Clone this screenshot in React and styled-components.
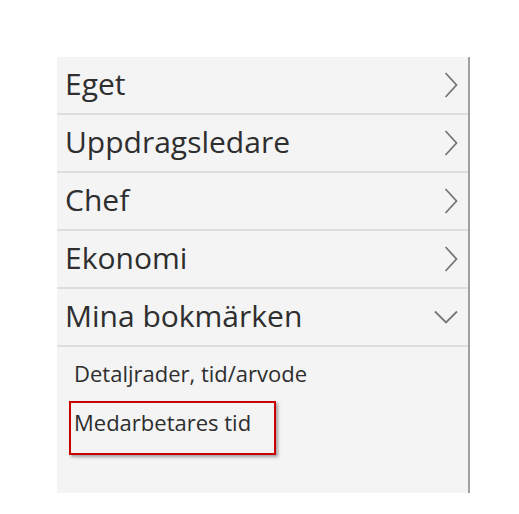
import styled, { createGlobalStyle } from "styled-components"

var Global = createGlobalStyle`
body {
margin: 0;
background: #fff;
font-family: "Open Sans", "Noto Sans", sans-serif;
}
`

var ChevronRight = () => (
  <svg width="14" height="26" viewBox="0 0 14 26" fill="none" stroke="#767676" strokeWidth="1.8">
    <path d="M1.5 1 L12.5 13 L1.5 25" />
  </svg>
)

var ChevronDown = () => (
  <svg width="24" height="14" viewBox="0 0 24 14" fill="none" stroke="#767676" strokeWidth="1.8">
    <path d="M1 1.5 L12 12.5 L23 1.5" />
  </svg>
)

var menu = ["Eget", "Uppdragsledare", "Chef", "Ekonomi"]

var App = () => (
  <>
    <Global />
    <Panel>
      {menu.map((label) => (
        <Row key={label}>
          <Label>{label}</Label>
          <ChevronRight />
        </Row>
      ))}
      <Row>
        <Label>Mina bokmärken</Label>
        <ChevronDown />
      </Row>
      <Sub>
        <SubItem>Detaljrader, tid/arvode</SubItem>
        <SubItem marked>Medarbetares tid</SubItem>
      </Sub>
    </Panel>
  </>
)

var Panel = styled.div`
margin: 57px 0 0 57px;
width: 411px;
height: 436px;
background: #f4f4f4;
border-right: 2px solid #a0a0a0;
display: flex;
flex-direction: column;
`

var Row = styled.div`
height: 56px;
border-bottom: 2px solid #dedede;
display: flex;
align-items: center;
justify-content: space-between;
padding: 0 8px 0 8px;
font-size: 30px;
color: #2e2e2e;
svg:first-of-type { margin-right: 2px; }
`

var Label = styled.span`
margin-bottom: 3px;
`

var Sub = styled.div`
display: flex;
flex-direction: column;
align-items: flex-start;
padding: 3px 0 0 12px;
gap: 6px;
`

var SubItem = styled.div`
font-size: 22px;
line-height: 30px;
color: #2e2e2e;
white-space: nowrap;
box-sizing: border-box;
width: ${(p) => (p.marked ? "207px" : "auto")};
padding: ${(p) => (p.marked ? "4px 3px 16px 3px" : "6px 3px 5px 3px")};
border: 2px solid ${(p) => (p.marked ? "#c80000" : "transparent")};
box-shadow: ${(p) => (p.marked ? "2px 2px 3px rgba(0,0,0,0.35)" : "none")};
`

export default App
